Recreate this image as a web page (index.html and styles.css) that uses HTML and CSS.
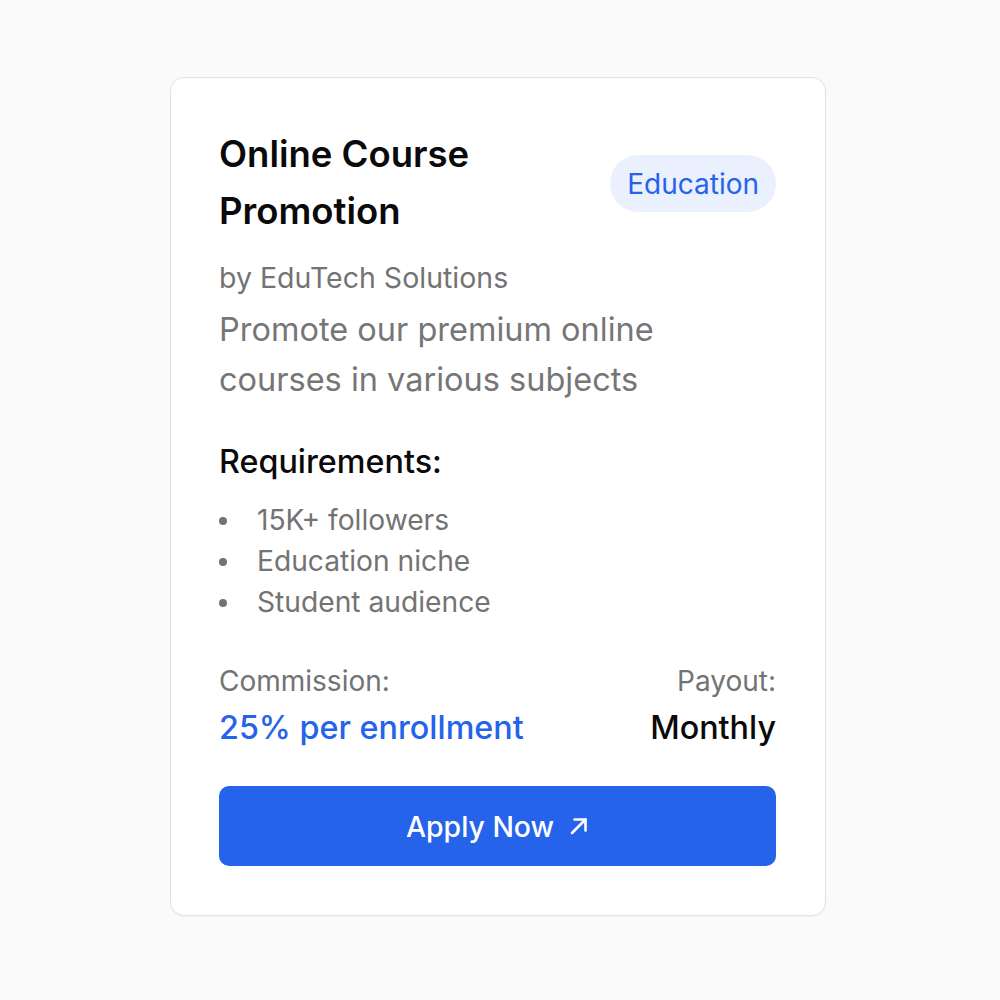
FILE: index.html
```html
<!DOCTYPE html>
<html lang="en">
<head>
<meta charset="utf-8">
<title>Online Course Promotion</title>
<link rel="stylesheet" href="styles.css">
</head>
<body>
<main class="page">
  <article class="card">
    <header class="card-header">
      <h2 class="title">Online Course Promotion</h2>
      <span class="badge">Education</span>
    </header>
    <p class="company">by EduTech Solutions</p>
    <p class="desc">Promote our premium online courses in various subjects</p>
    <h3 class="req-title">Requirements:</h3>
    <ul class="req-list">
      <li>15K+ followers</li>
      <li>Education niche</li>
      <li>Student audience</li>
    </ul>
    <div class="terms">
      <div class="term">
        <span class="term-label">Commission:</span>
        <span class="term-value accent">25% per enrollment</span>
      </div>
      <div class="term right">
        <span class="term-label">Payout:</span>
        <span class="term-value">Monthly</span>
      </div>
    </div>
    <button class="apply" type="button">Apply Now
      <svg class="arrow" viewBox="0 0 20 20" width="20" height="20" fill="none" stroke="currentColor" stroke-width="2.6" stroke-linecap="round" stroke-linejoin="round"><path d="M3 17L16.5 3.5"/><path d="M5.5 3.5h11v11"/></svg>
    </button>
  </article>
</main>
</body>
</html>
```
FILE: styles.css
```css
* { box-sizing: border-box; }
html, body { margin: 0; padding: 0; }
body {
  background: #fafafa;
  font-family: Inter, "Noto Sans", sans-serif;
  width: 1000px;
  height: 1000px;
}
.page {
  padding-top: 77px;
  display: flex;
  justify-content: center;
  padding-left: 170px;
  padding-right: 174px;
}
.card {
  width: 656px;
  background: #fff;
  border: 1px solid #e3e3e3;
  border-radius: 14px;
  padding: 48px 49px 49px 48px;
  box-shadow: 0 1px 2px rgba(0,0,0,0.04);
}
.card-header {
  display: flex;
  justify-content: space-between;
  align-items: center;
  gap: 16px;
}
.title {
  margin: 0;
  font-size: 36.5px;
  line-height: 57px;
  font-weight: 600;
  color: #0a0a0a;
  width: 330px;
}
.badge {
  background: #eaf0fd;
  color: #2563eb;
  font-size: 28px;
  line-height: 40px;
  padding: 9px 17px 8px;
  border-radius: 999px;
}
.company {
  margin: 18px 0 0;
  font-size: 28.5px;
  line-height: 40px;
  color: #737373;
}
.desc {
  margin: 7px 0 0;
  max-width: 480px;
  font-size: 32.5px;
  line-height: 50px;
  color: #767676;
}
.req-title {
  margin: 35px 0 0;
  font-size: 32.3px;
  line-height: 44px;
  font-weight: 500;
  color: #0a0a0a;
}
.req-list {
  list-style: none;
  margin: 16px 0 0;
  padding: 0;
  font-size: 28.2px;
  line-height: 41px;
  color: #737373;
}
.req-list li {
  display: flex;
  align-items: center;
}
.req-list li::before {
  content: "";
  width: 8px;
  height: 8px;
  border-radius: 50%;
  background: #737373;
  margin: 0 30px 0 0;
  flex: none;
}
.terms {
  margin-top: 38px;
  display: flex;
  justify-content: space-between;
}
.term { display: flex; flex-direction: column; }
.term.right { align-items: flex-end; }
.term-label {
  font-size: 28px;
  line-height: 40px;
  color: #737373;
}
.term-value {
  font-size: 32.3px;
  line-height: 54px;
  font-weight: 500;
  color: #0a0a0a;
}
.term-value.accent { color: #2563eb; }
.apply {
  margin-top: 31px;
  width: 100%;
  height: 80px;
  border: 0;
  border-radius: 10px;
  background: #2563eb;
  color: #fff;
  font-family: inherit;
  font-size: 28.4px;
  font-weight: 500;
  display: flex;
  align-items: center;
  justify-content: center;
  gap: 15px;
}
.arrow { width: 20px; height: 20px; }
```
